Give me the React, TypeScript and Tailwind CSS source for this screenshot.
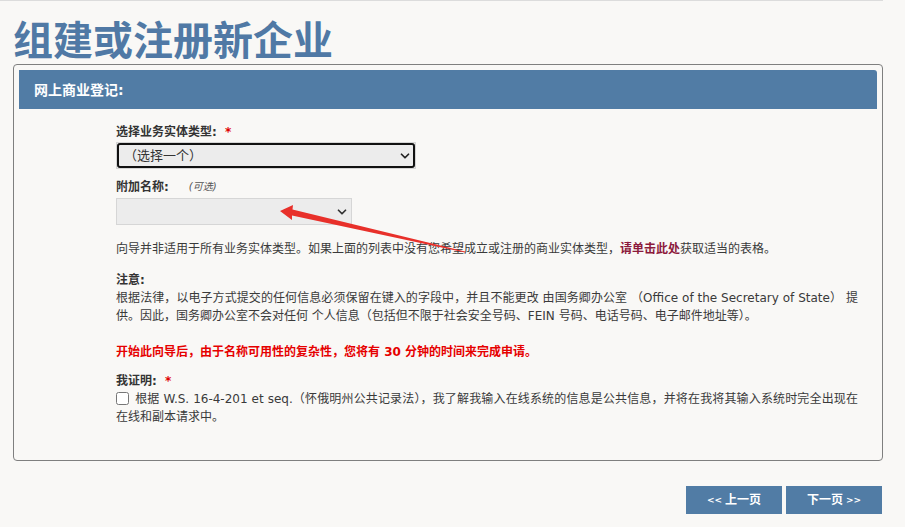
import { ChevronDown } from 'lucide-react';

// Wizard page: form / register a new business
export default function App() {
  return (
    <div className="relative min-h-[527px] w-[905px] overflow-hidden bg-[#f9f8f6] font-['DejaVu_Sans','Noto_Sans_CJK_SC',sans-serif] text-[12px] leading-[18px] text-[#3a3a3a]">
      {/* top rule */}
      <div className="h-px w-[883px] bg-[#dcdcdc]"></div>

      {/* Page title */}
      <h1 className="mt-[17px] pl-[13px] font-['Noto_Sans_CJK_SC',sans-serif] text-[40px] font-bold leading-[40px] text-[#5079a5]">
        组建或注册新企业
      </h1>

      {/* Panel */}
      <div className="ml-[13px] mt-[6px] w-[870px] rounded-[4px] border border-[#7f7f7f] p-[5px]">
        <div className="flex h-[39px] items-center rounded-tr-[3px] bg-[#517ca5] pl-[15px] text-[14px] font-bold text-white">
          网上商业登记:
        </div>

        <div className="pb-[29px] pl-[97px] pr-[19px]">
          {/* Entity type */}
          <div className="mt-[14px] font-bold text-[#333]">
            选择业务实体类型: <span className="ml-[4px] text-[#e00000]">*</span>
          </div>
          <div className="mt-px w-[300px] border border-[#d4d4d4]">
            <div className="flex h-[25px] items-center justify-between rounded-[3px] border-2 border-[#111] bg-[#ececec] pl-[5px] pr-[1px] text-[13px] text-[#333]">
              <span>（选择一个）</span>
              <ChevronDown size={14} strokeWidth={3} className="text-[#222]" />
            </div>
          </div>

          {/* Additional name */}
          <div className="mt-[9px] flex items-center font-bold text-[#333]">
            附加名称:
            <span className="ml-[20px] text-[10px] font-normal italic text-[#555]">(可选)</span>
          </div>
          <div className="mt-[2px] flex h-[27px] w-[236px] items-center justify-end border border-[#d6d6d6] bg-[#ececec] pr-[2px]">
            <ChevronDown size={14} strokeWidth={3} className="text-[#333]" />
          </div>

          {/* Info */}
          <p className="mt-[15px]">
            向导并非适用于所有业务实体类型。如果上面的列表中没有您希望成立或注册的商业实体类型，
            <a className="font-bold text-[#8c1a3c]">请单击此处</a>获取适当的表格。
          </p>

          <div className="mt-[13px] font-bold text-[#333]">注意:</div>
          <p className="text-justify">
            根据法律，以电子方式提交的任何信息必须保留在键入的字段中，并且不能更改 由国务卿办公室 （Office of the Secretary of State） 提供。因此，国务卿办公室不会对任何 个人信息（包括但不限于社会安全号码、FEIN 号码、电话号码、电子邮件地址等）。
          </p>

          <p className="mt-[18px] font-bold text-[#e60000]">
            开始此向导后，由于名称可用性的复杂性，您将有 30 分钟的时间来完成申请。
          </p>

          {/* Certification */}
          <div className="mt-[11px] font-bold text-[#333]">
            我证明: <span className="ml-[4px] text-[#e00000]">*</span>
          </div>
          <p className="text-justify">
            <input type="checkbox" className="m-0 mr-[6px] h-[13px] w-[13px] align-[-2px]" />
            根据 W.S. 16-4-201 et seq.（怀俄明州公共记录法），我了解我输入在线系统的信息是公共信息，并将在我将其输入系统时完全出现在在线和副本请求中。
          </p>
        </div>
      </div>

      {/* Navigation */}
      <div className="mt-[25px] flex justify-end gap-[4px] pr-[23px]">
        <button className="flex h-[28px] w-[96px] items-center justify-center gap-[3px] bg-[#517ca5] text-[12px] font-bold text-white">
          <span className="text-[9px]">&lt;&lt;</span>上一页
        </button>
        <button className="flex h-[28px] w-[96px] items-center justify-center gap-[3px] bg-[#517ca5] text-[12px] font-bold text-white">
          下一页<span className="text-[9px]">&gt;&gt;</span>
        </button>
      </div>

      {/* Annotation arrow */}
      <svg className="pointer-events-none absolute left-0 top-0" width="905" height="527">
        <polygon points="280,211 293,205 292.5,209.5 465,251.5 465,252.5 292,215.5 292,220" fill="#e8302a" />
      </svg>
    </div>
  );
}
